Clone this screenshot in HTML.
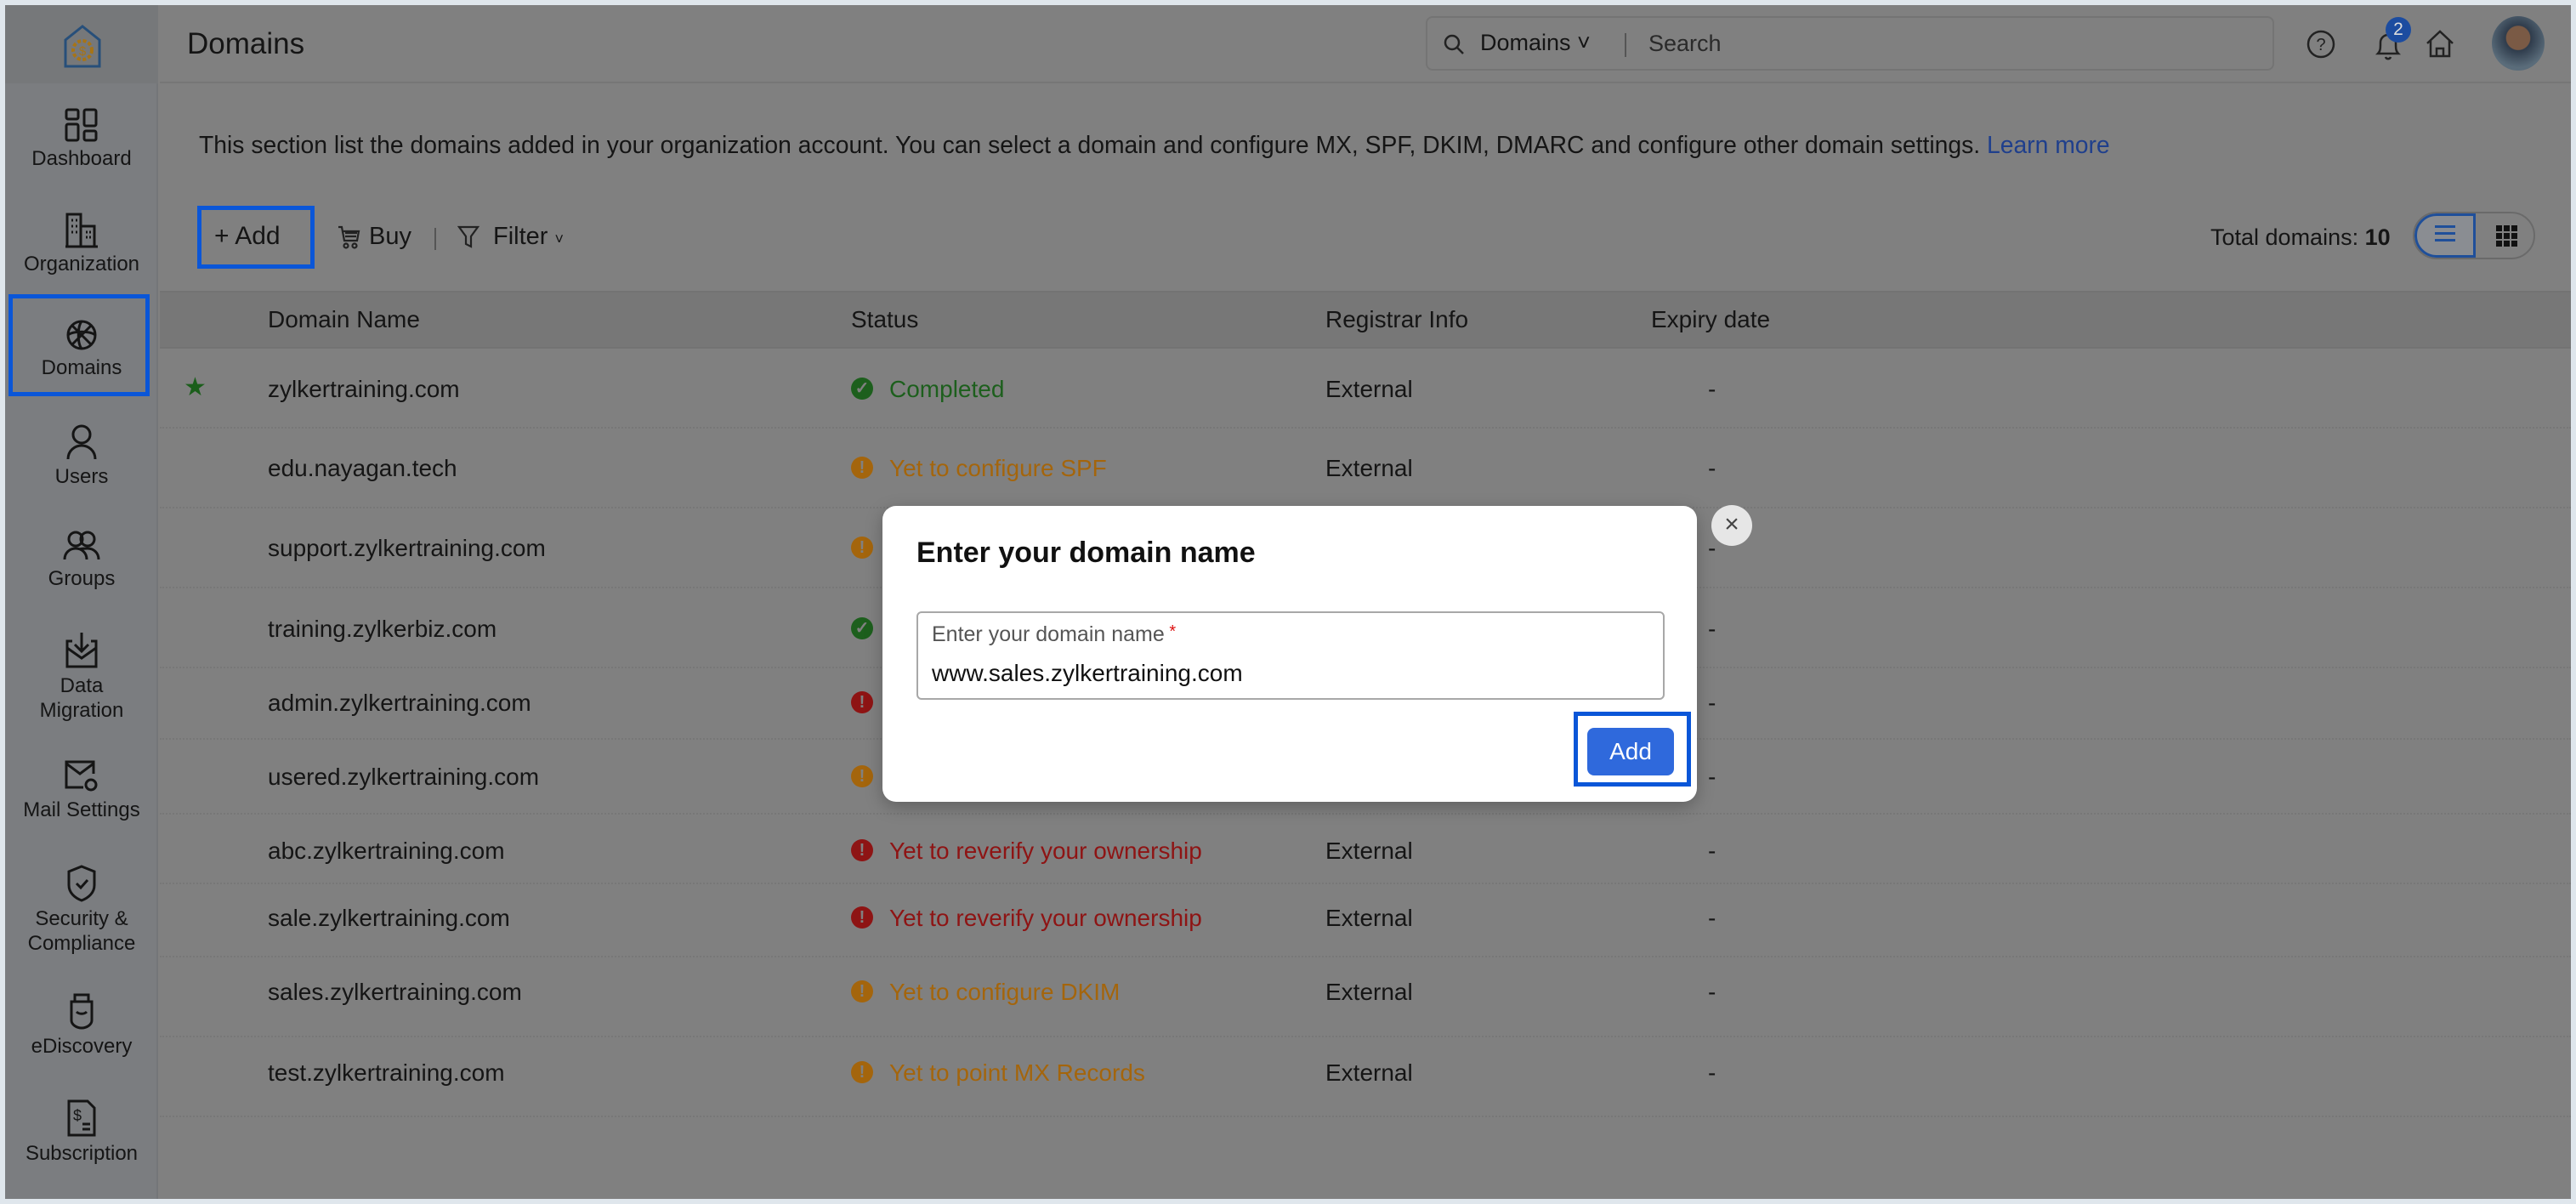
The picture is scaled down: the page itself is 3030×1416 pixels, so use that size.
<!DOCTYPE html>
<html><head><meta charset="utf-8"><style>
*{margin:0;padding:0;box-sizing:border-box}
body{width:3030px;height:1416px;background:#dfe6ec;font-family:"Liberation Sans",sans-serif;position:relative;overflow:hidden;color:#151515}
.a{position:absolute}
#frame{left:6px;top:6px;width:3018px;height:1404px;background:#808080;overflow:hidden}
#side{left:0;top:0;width:180px;height:1404px;background:#7b7d80;border-right:2px solid #747679}
#logo{left:0;top:0;width:180px;height:92px;background:#76787a}
.si{position:absolute;left:0;width:180px;text-align:center;font-size:24px;color:#151515;line-height:29px}
.si svg{display:block;margin:0 auto 4px}
#hdr{left:182px;top:0;right:0;height:92px;border-bottom:2px solid #767676}
.t{font-size:28px;white-space:nowrap}
.row{position:absolute;left:182px;right:0;border-bottom:2px dotted #777}
.ic{position:absolute;width:26px;height:26px;border-radius:50%;color:#808080;font-weight:bold;font-size:20px;text-align:center;line-height:26px}
</style></head><body>
<div id="frame" class="a">
 <div id="side" class="a">
  <div id="logo" class="a"><svg class="a" style="left:68px;top:22px" width="46" height="54" viewBox="0 0 46 54"><path d="M23 3 L43 19 V50 H3 V19 Z" fill="none" stroke="#274f7a" stroke-width="3"/><circle cx="23" cy="31" r="11" fill="none" stroke="#a77416" stroke-width="4" stroke-dasharray="4 2.5"/><text x="23" y="37" font-size="15" text-anchor="middle" fill="#a77416" font-family="Liberation Sans">$</text></svg></div>
  <div class="si" style="top:120px"><svg width="42" height="42" viewBox="0 0 42 42" fill="none" stroke="#151515" stroke-width="3"><rect x="3" y="3" width="14" height="11" rx="2"/><rect x="3" y="20" width="14" height="19" rx="2"/><rect x="24" y="3" width="14" height="19" rx="2"/><rect x="24" y="28" width="14" height="11" rx="2"/></svg>Dashboard</div>
  <div class="si" style="top:242px"><svg width="42" height="44" viewBox="0 0 42 44" fill="none" stroke="#151515" stroke-width="3"><path d="M4 42V4h16v38M20 18h16v24M2 42h38"/><path d="M9 11h2M14 11h2M9 18h2M14 18h2M9 25h2M14 25h2M26 25h2M30 25h2M26 31h2M30 31h2"/></svg>Organization</div>
  <div class="si" style="top:368px"><svg width="40" height="40" viewBox="0 0 40 40" fill="none" stroke="#151515" stroke-width="3"><circle cx="20" cy="20" r="16"/><path d="M9 9L31 31M31 9L9 31M4 20c6-5 26-5 32 0M20 4c-5 6-5 26 0 32"/></svg>Domains</div>
  <div class="si" style="top:492px"><svg width="40" height="44" viewBox="0 0 40 44" fill="none" stroke="#151515" stroke-width="3"><circle cx="20" cy="13" r="10"/><path d="M4 42c0-10 8-16 16-16s16 6 16 16"/></svg>Users</div>
  <div class="si" style="top:616px"><svg width="46" height="40" viewBox="0 0 46 40" fill="none" stroke="#151515" stroke-width="3"><circle cx="16" cy="12" r="8"/><circle cx="30" cy="12" r="8"/><path d="M3 36c0-8 6-13 13-13s13 5 13 13M20 24c3-1 5-1 10-1 7 0 13 5 13 13"/></svg>Groups</div>
  <div class="si" style="top:736px"><svg width="42" height="46" viewBox="0 0 42 46" fill="none" stroke="#151515" stroke-width="3"><path d="M21 2v22M13 16l8 8 8-8M10 12H4v30h34V12h-6M4 20l17 12 17-12"/></svg>Data<br>Migration</div>
  <div class="si" style="top:884px"><svg width="44" height="44" viewBox="0 0 44 44" fill="none" stroke="#151515" stroke-width="3"><path d="M24 36H4V6h32v14M4 8l16 12 16-12"/><circle cx="33" cy="33" r="6"/></svg>Mail Settings</div>
  <div class="si" style="top:1010px"><svg width="40" height="46" viewBox="0 0 40 46" fill="none" stroke="#151515" stroke-width="3"><path d="M20 3l15 6v16c0 9-7 15-15 18C12 40 5 34 5 25V9z"/><path d="M14 23l5 5 8-9"/></svg>Security &amp;<br>Compliance</div>
  <div class="si" style="top:1160px"><svg width="40" height="46" viewBox="0 0 40 46" fill="none" stroke="#151515" stroke-width="3"><path d="M12 4h16v8H12zM8 12h24v22c0 5-6 9-12 9S8 39 8 34z"/><path d="M14 24c3 3 9 3 12 0"/></svg>eDiscovery</div>
  <div class="si" style="top:1286px"><svg width="38" height="46" viewBox="0 0 38 46" fill="none" stroke="#151515" stroke-width="3"><path d="M4 3h22l8 8v32H4z"/><path d="M20 30h9M20 36h9"/><text x="9" y="26" font-size="18" fill="#151515" stroke="none" font-family="Liberation Sans">$</text></svg>Subscription</div>
  <div class="a" style="left:4px;top:340px;width:166px;height:120px;border:5px solid #0a56d8"></div>
 </div>

 <div id="hdr" class="a">
  <div class="a" style="left:32px;top:26px;font-size:35px">Domains</div>
  <div class="a" style="left:1489px;top:13px;width:998px;height:64px;border:2px solid #747474;border-radius:8px">
   <svg class="a" style="left:18px;top:18px" width="26" height="26" viewBox="0 0 26 26" fill="none" stroke="#222" stroke-width="2.5"><circle cx="11" cy="11" r="8"/><path d="M17 17l7 7"/></svg>
   <div class="a t" style="left:62px;top:14px;font-size:27px">Domains ˅</div>
   <div class="a" style="left:232px;top:18px;width:2px;height:28px;background:#555"></div>
   <div class="a t" style="left:260px;top:15px;font-size:27px;color:#2a2a2a">Search</div>
  </div>
  <svg class="a" style="left:2524px;top:28px" width="36" height="36" viewBox="0 0 36 36" fill="none" stroke="#222" stroke-width="2.5"><circle cx="18" cy="18" r="15"/><text x="18" y="25" font-size="20" text-anchor="middle" fill="#222" stroke="none" font-family="Liberation Sans">?</text></svg>
  <svg class="a" style="left:2603px;top:28px" width="36" height="40" viewBox="0 0 36 40" fill="none" stroke="#222" stroke-width="2.5"><path d="M6 29c3-3 3-6 3-13a9 9 0 0 1 18 0c0 7 0 10 3 13zM15 33c1 3 5 3 6 0"/></svg>
  <div class="a" style="left:2618px;top:14px;width:30px;height:30px;border-radius:50%;background:#1c4ca0;color:#ddd;font-size:21px;text-align:center;line-height:30px">2</div>
  <svg class="a" style="left:2664px;top:28px" width="36" height="36" viewBox="0 0 36 36" fill="none" stroke="#222" stroke-width="2.5"><path d="M3 17L18 3l15 14M7 14v18h22V14M14 32v-9h8v9"/></svg>
  <div class="a" style="left:2743px;top:13px;width:62px;height:64px;border-radius:50%;background:radial-gradient(circle at 50% 40%,#7a5a45 0 28%,#2f3c4c 30%,#5a6c7a 70%)"></div>
 </div>

 <div class="a t" style="left:228px;top:148px;font-size:28.3px;color:#151515">This section list the domains added in your organization account. You can select a domain and configure MX, SPF, DKIM, DMARC and configure other domain settings. <span style="color:#1f3f8c">Learn more</span></div>

 <div class="a" style="left:226px;top:236px;width:138px;height:74px;border:5px solid #0a56d8"></div>
 <div class="a t" style="left:246px;top:255px;font-size:30px">+ Add</div>
 <svg class="a" style="left:390px;top:258px" width="28" height="30" viewBox="0 0 28 30" fill="none" stroke="#222" stroke-width="2.2"><path d="M2 3h4l3 16h15l2-11H8M10 10h14M10 14h13"/><circle cx="11" cy="25" r="2.5"/><circle cx="21" cy="25" r="2.5"/></svg>
 <div class="a t" style="left:428px;top:256px;font-size:29px">Buy</div>
 <div class="a" style="left:505px;top:262px;width:2px;height:26px;background:#555"></div>
 <svg class="a" style="left:532px;top:258px" width="26" height="30" viewBox="0 0 26 30" fill="none" stroke="#222" stroke-width="2.2"><path d="M2 3h22l-8 11v12l-6-3v-9z"/></svg>
 <div class="a t" style="left:574px;top:256px;font-size:29px">Filter <span style="font-size:18px">˅</span></div>

 <div class="a t" style="left:2594px;top:258px;font-size:27px">Total domains: <b>10</b></div>
 <div class="a" style="left:2832px;top:243px;width:144px;height:56px;border:2px solid #6a6a6a;border-radius:28px;overflow:hidden">
  <div class="a" style="left:0;top:0;width:72px;height:52px;background:#8a8d92;border:3px solid #1f4f9a;border-radius:28px 0 0 28px"></div>
  <div class="a" style="left:24px;top:14px;width:24px;height:3px;background:#1f4f9a;box-shadow:0 8px 0 #1f4f9a,0 16px 0 #1f4f9a"></div>
  <div class="a" style="left:96px;top:14px;width:7px;height:7px;background:#111;box-shadow:9px 0 #111,18px 0 #111,0 9px #111,9px 9px #111,18px 9px #111,0 18px #111,9px 18px #111,18px 18px #111"></div>
 </div>

 <div class="a" style="left:182px;top:336px;right:0;height:68px;background:#777;border-top:2px solid #737373;border-bottom:2px solid #737373"></div>
 <div class="a t" style="left:309px;top:354px">Domain Name</div>
 <div class="a t" style="left:995px;top:354px">Status</div>
 <div class="a t" style="left:1553px;top:354px">Registrar Info</div>
 <div class="a t" style="left:1936px;top:354px">Expiry date</div>

 <div class="row" style="top:404px;height:94px"></div>
 <div class="row" style="top:498px;height:94px"></div>
 <div class="row" style="top:592px;height:94px"></div>
 <div class="row" style="top:686px;height:94px"></div>
 <div class="row" style="top:780px;height:84px"></div>
 <div class="row" style="top:864px;height:88px"></div>
 <div class="row" style="top:952px;height:82px"></div>
 <div class="row" style="top:1034px;height:86px"></div>
 <div class="row" style="top:1120px;height:94px"></div>
 <div class="row" style="top:1214px;height:94px"></div>

 <div class="a" style="left:210px;top:432px;font-size:30px;color:#1b5e1b">★</div>
 <div class="a t" style="left:309px;top:436px">zylkertraining.com</div>
 <div class="ic" style="left:995px;top:438px;background:#1d5f1d">✓</div><div class="a t" style="left:1040px;top:436px;color:#1d5f1d">Completed</div>
 <div class="a t" style="left:1553px;top:436px">External</div><div class="a t" style="left:2003px;top:436px">-</div>

 <div class="a t" style="left:309px;top:529px">edu.nayagan.tech</div>
 <div class="ic" style="left:995px;top:531px;background:#a4650c">!</div><div class="a t" style="left:1040px;top:529px;color:#a4650c">Yet to configure SPF</div>
 <div class="a t" style="left:1553px;top:529px">External</div><div class="a t" style="left:2003px;top:529px">-</div>

 <div class="a t" style="left:309px;top:623px">support.zylkertraining.com</div>
 <div class="ic" style="left:995px;top:625px;background:#a4650c">!</div>
 <div class="a t" style="left:309px;top:718px">training.zylkerbiz.com</div>
 <div class="ic" style="left:995px;top:720px;background:#1d5f1d">✓</div>
 <div class="a t" style="left:309px;top:805px">admin.zylkertraining.com</div>
 <div class="ic" style="left:995px;top:807px;background:#8e1414">!</div>
 <div class="a t" style="left:309px;top:892px">usered.zylkertraining.com</div>
 <div class="ic" style="left:995px;top:894px;background:#a4650c">!</div>
 <div class="a t" style="left:2003px;top:623px">-</div><div class="a t" style="left:2003px;top:718px">-</div><div class="a t" style="left:2003px;top:805px">-</div><div class="a t" style="left:2003px;top:892px">-</div>

 <div class="a t" style="left:309px;top:979px">abc.zylkertraining.com</div>
 <div class="ic" style="left:995px;top:981px;background:#8e1414">!</div><div class="a t" style="left:1040px;top:979px;color:#8e1414">Yet to reverify your ownership</div>
 <div class="a t" style="left:1553px;top:979px">External</div><div class="a t" style="left:2003px;top:979px">-</div>

 <div class="a t" style="left:309px;top:1058px">sale.zylkertraining.com</div>
 <div class="ic" style="left:995px;top:1060px;background:#8e1414">!</div><div class="a t" style="left:1040px;top:1058px;color:#8e1414">Yet to reverify your ownership</div>
 <div class="a t" style="left:1553px;top:1058px">External</div><div class="a t" style="left:2003px;top:1058px">-</div>

 <div class="a t" style="left:309px;top:1145px">sales.zylkertraining.com</div>
 <div class="ic" style="left:995px;top:1147px;background:#a4650c">!</div><div class="a t" style="left:1040px;top:1145px;color:#a4650c">Yet to configure DKIM</div>
 <div class="a t" style="left:1553px;top:1145px">External</div><div class="a t" style="left:2003px;top:1145px">-</div>

 <div class="a t" style="left:309px;top:1240px">test.zylkertraining.com</div>
 <div class="ic" style="left:995px;top:1242px;background:#a4650c">!</div><div class="a t" style="left:1040px;top:1240px;color:#a4650c">Yet to point MX Records</div>
 <div class="a t" style="left:1553px;top:1240px">External</div><div class="a t" style="left:2003px;top:1240px">-</div>

 <div class="a" style="left:1032px;top:589px;width:958px;height:348px;background:#fff;border-radius:16px;box-shadow:0 6px 20px rgba(0,0,0,.25)">
  <div class="a" style="left:40px;top:36px;font-size:34px;font-weight:bold;color:#111;white-space:nowrap">Enter your domain name</div>
  <div class="a" style="left:40px;top:124px;width:880px;height:104px;border:2px solid #a8a8a8;border-radius:6px">
   <div class="a t" style="left:16px;top:11px;font-size:25px;color:#555">Enter your domain name<span style="color:#d11;font-size:20px;vertical-align:top"> *</span></div>
   <div class="a t" style="left:16px;top:55px;font-size:28px;color:#111">www.sales.zylkertraining.com</div>
  </div>
  <div class="a" style="left:813px;top:242px;width:138px;height:88px;border:5px solid #0a56d8"></div>
  <div class="a" style="left:829px;top:261px;width:102px;height:56px;background:#2f69dc;border-radius:8px;color:#fff;font-size:28px;text-align:center;line-height:56px">Add</div>
 </div>
 <div class="a" style="left:2007px;top:588px;width:48px;height:48px;border-radius:50%;background:#e6e6e6;text-align:center;line-height:46px;font-size:30px;color:#444">×</div>
</div>
</body></html>
